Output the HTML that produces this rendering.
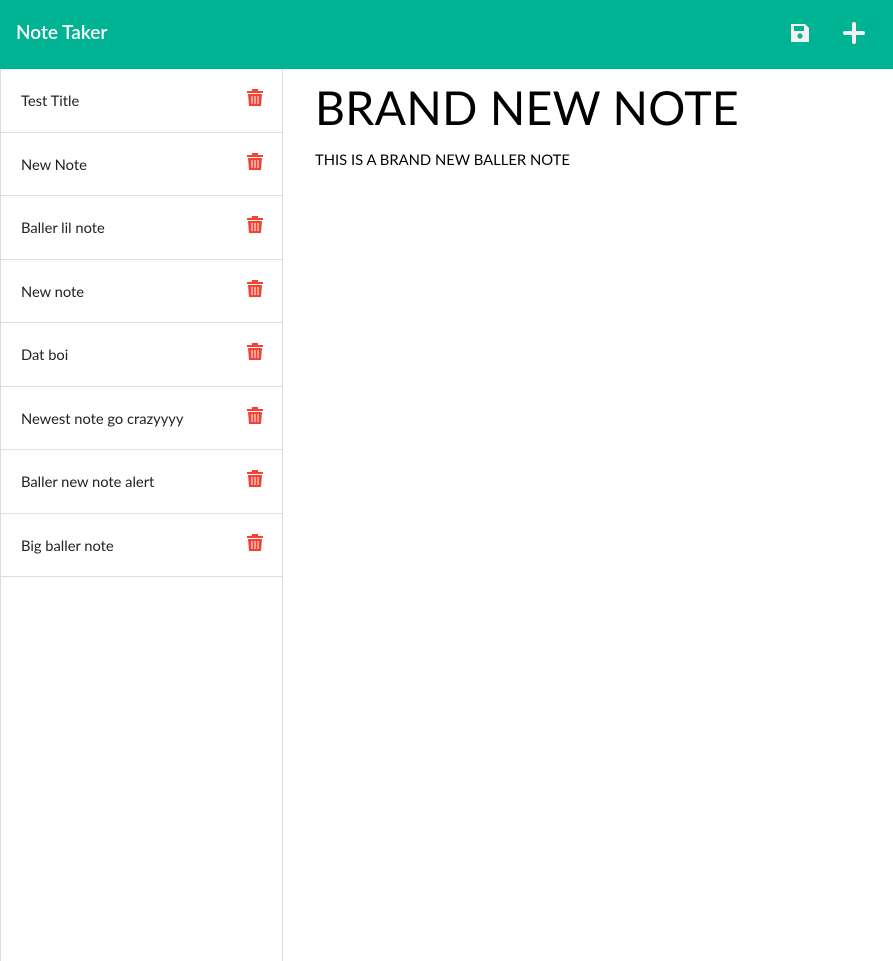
<!DOCTYPE html>
<html><head><style>
*{box-sizing:border-box;margin:0;padding:0}
body{width:893px;height:961px;overflow:hidden;font-family:"Lato","Liberation Sans",sans-serif;background:#fff;position:relative}
.hdr{position:absolute;left:0;top:0;width:893px;height:69px;background:#00b392}
.hdr .t{position:absolute;left:16px;top:21px;color:#fff;font-size:19px;font-weight:600}
.side{position:absolute;left:0;top:69px;width:283px;height:892px;border-left:1px solid #ddd;border-right:1px solid #ddd}
.item{height:63.5px;border-bottom:1px solid #ddd;position:relative;font-size:14.7px;color:#222}
.item span{position:absolute;left:20px;top:23px}
.item svg{position:absolute;left:246px;top:19px}
h1{position:absolute;left:315px;top:79px;font-size:46.4px;font-weight:400;color:#000;letter-spacing:0.3px}
p{position:absolute;left:315px;top:151px;font-size:14.8px;color:#000}
</style></head><body>
<div class="hdr"><div class="t">Note Taker</div>
<svg style="position:absolute;left:789px;top:22px" width="22" height="22" viewBox="0 0 22 22"><path d="M2 2h14l4 4v14H2z" style="fill:#f2f2f2"/><rect x="5" y="4" width="10" height="5" fill="#00b392"/><circle cx="11" cy="14" r="2.6" fill="#00b392"/></svg>
<svg style="position:absolute;left:843px;top:22px" width="22" height="22" viewBox="0 0 22 22"><path d="M11 2v18M2 11h18" stroke="#f2f2f2" stroke-width="4" stroke-linecap="round"/></svg>
</div>
<div class="side">
<div class="item"><span>Test Title</span><svg width="16" height="18" viewBox="0 0 16 18"><path d="M5 1h6v2h5v2H0V3h5z M1 6h14l-1 12H2z" fill="#f44336"/><path d="M5 8v8M8 8v8M11 8v8" stroke="#fff" stroke-width="1"/></svg></div>
<div class="item"><span>New Note</span><svg width="16" height="18" viewBox="0 0 16 18"><path d="M5 1h6v2h5v2H0V3h5z M1 6h14l-1 12H2z" fill="#f44336"/><path d="M5 8v8M8 8v8M11 8v8" stroke="#fff" stroke-width="1"/></svg></div>
<div class="item"><span>Baller lil note</span><svg width="16" height="18" viewBox="0 0 16 18"><path d="M5 1h6v2h5v2H0V3h5z M1 6h14l-1 12H2z" fill="#f44336"/><path d="M5 8v8M8 8v8M11 8v8" stroke="#fff" stroke-width="1"/></svg></div>
<div class="item"><span>New note</span><svg width="16" height="18" viewBox="0 0 16 18"><path d="M5 1h6v2h5v2H0V3h5z M1 6h14l-1 12H2z" fill="#f44336"/><path d="M5 8v8M8 8v8M11 8v8" stroke="#fff" stroke-width="1"/></svg></div>
<div class="item"><span>Dat boi</span><svg width="16" height="18" viewBox="0 0 16 18"><path d="M5 1h6v2h5v2H0V3h5z M1 6h14l-1 12H2z" fill="#f44336"/><path d="M5 8v8M8 8v8M11 8v8" stroke="#fff" stroke-width="1"/></svg></div>
<div class="item"><span>Newest note go crazyyyy</span><svg width="16" height="18" viewBox="0 0 16 18"><path d="M5 1h6v2h5v2H0V3h5z M1 6h14l-1 12H2z" fill="#f44336"/><path d="M5 8v8M8 8v8M11 8v8" stroke="#fff" stroke-width="1"/></svg></div>
<div class="item"><span>Baller new note alert</span><svg width="16" height="18" viewBox="0 0 16 18"><path d="M5 1h6v2h5v2H0V3h5z M1 6h14l-1 12H2z" fill="#f44336"/><path d="M5 8v8M8 8v8M11 8v8" stroke="#fff" stroke-width="1"/></svg></div>
<div class="item"><span>Big baller note</span><svg width="16" height="18" viewBox="0 0 16 18"><path d="M5 1h6v2h5v2H0V3h5z M1 6h14l-1 12H2z" fill="#f44336"/><path d="M5 8v8M8 8v8M11 8v8" stroke="#fff" stroke-width="1"/></svg></div>
</div>
<h1>BRAND NEW NOTE</h1>
<p>THIS IS A BRAND NEW BALLER NOTE</p>
</body></html>
